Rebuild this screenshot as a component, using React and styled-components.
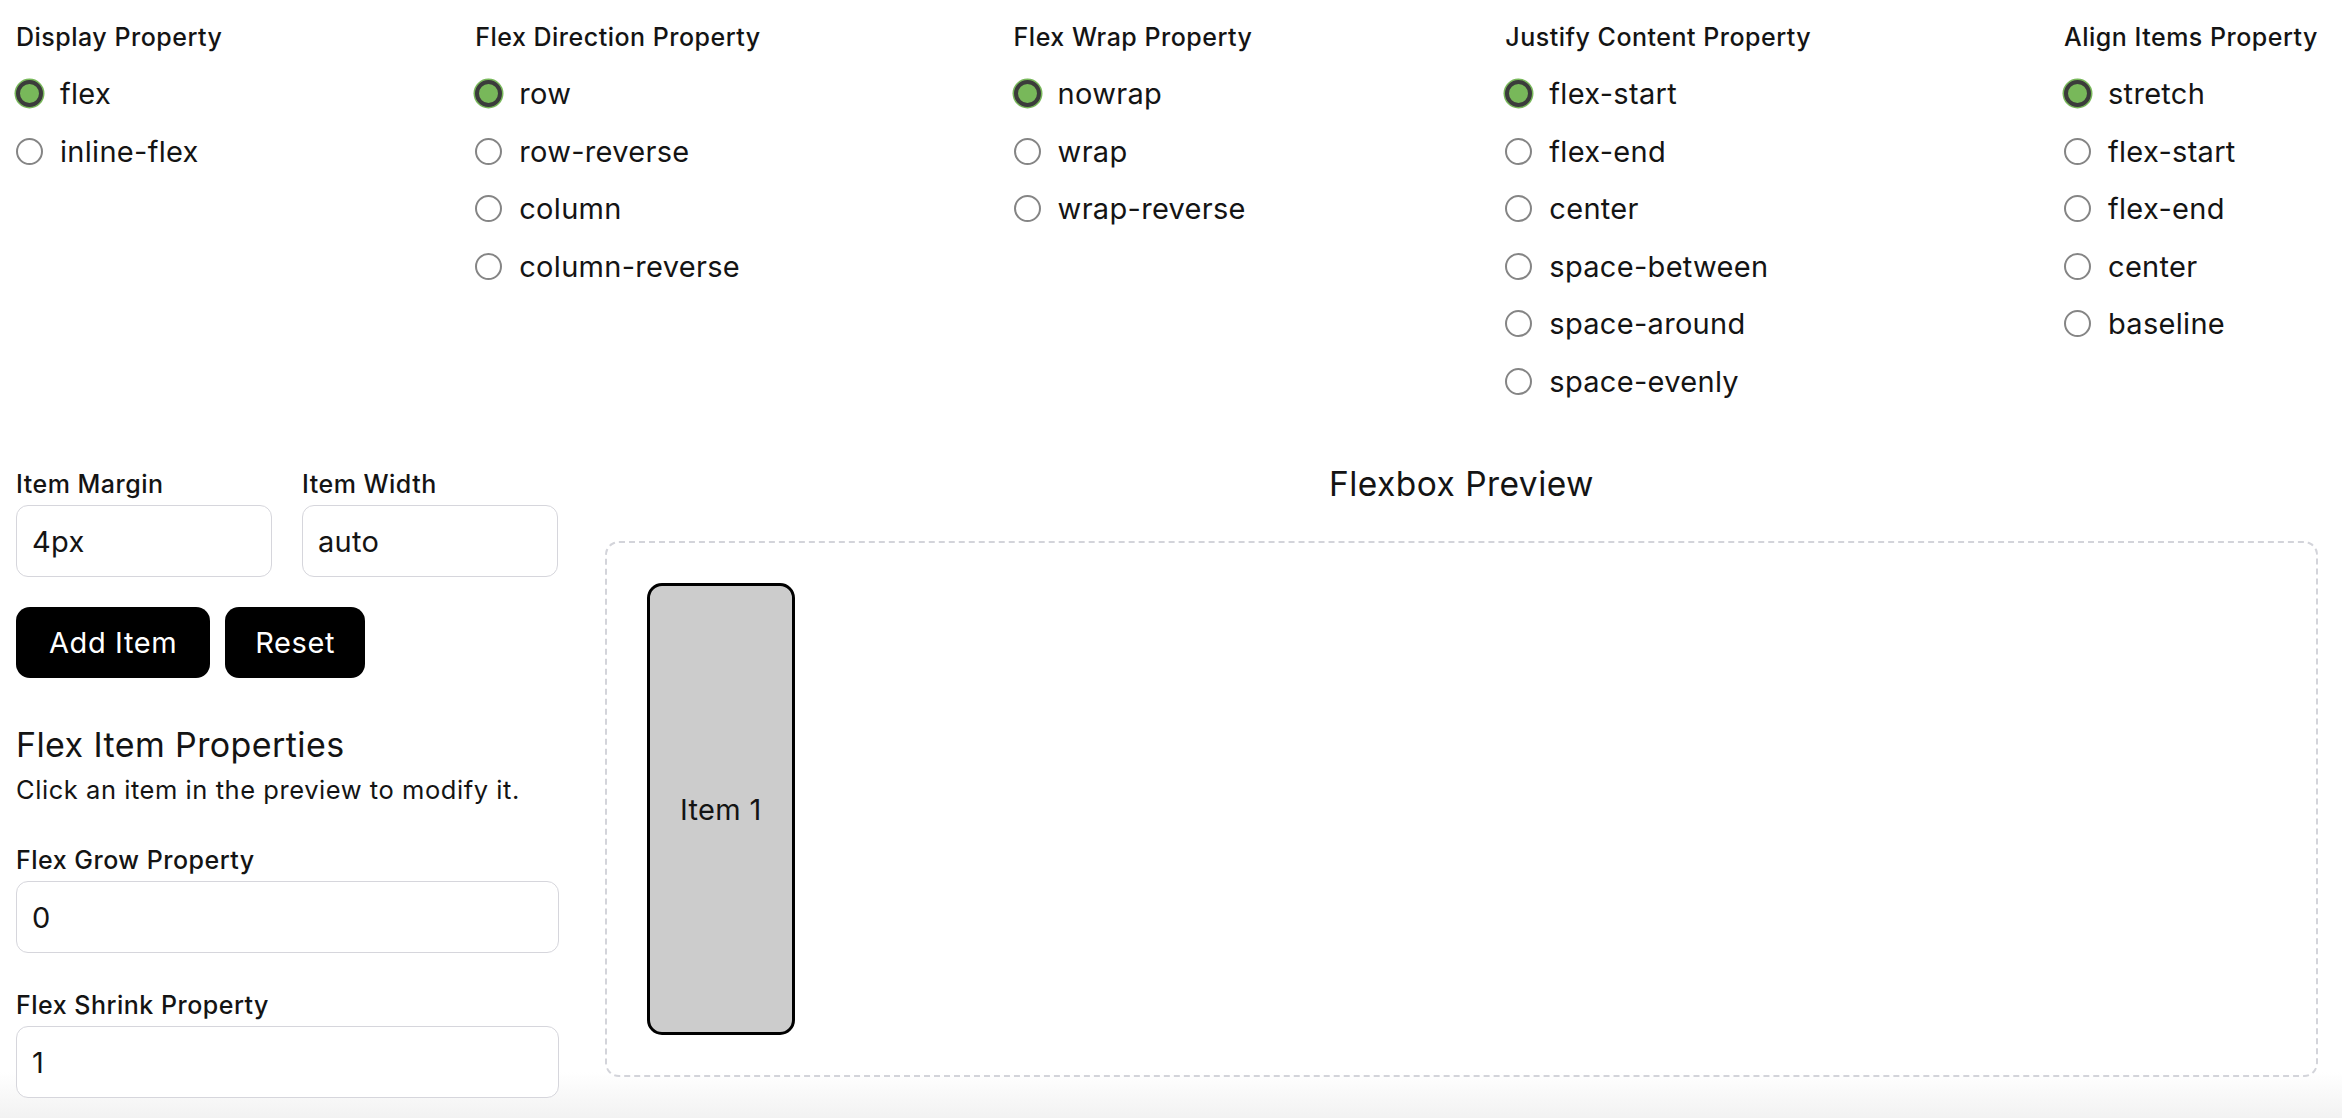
import React, { useState } from "react";
import styled, { createGlobalStyle } from "styled-components";

const GlobalStyle = createGlobalStyle`
  * {
    box-sizing: border-box;
  }
  body {
    margin: 0;
    font-family: "Inter", "Noto Sans", sans-serif;
    color: #141414;
    background: #fff;
  }
`;

const Page = styled.div`
  min-height: 100vh;
  padding: 22px 24px 0 16px;
  background: linear-gradient(to bottom, #fff calc(100% - 46px), #f2f2f2 100%);
`;

const Controls = styled.div`
  display: flex;
  justify-content: space-between;
  align-items: flex-start;
`;

const Group = styled.div`
  display: flex;
  flex-direction: column;
`;

const GroupTitle = styled.div`
  font-size: 25px;
  font-weight: 500;
  letter-spacing: 0.5px;
  line-height: 30px;
  margin-bottom: 13px;
`;

const Option = styled.label`
  display: flex;
  align-items: center;
  gap: 17px;
  height: 57.5px;
  font-size: 29px;
  letter-spacing: 0.3px;
  cursor: pointer;
`;

const Radio = styled.input`
  appearance: none;
  margin: 0;
  width: 27px;
  height: 27px;
  border-radius: 50%;
  border: 2px solid #858585;
  background: #fff;
  cursor: pointer;

  &:checked {
    border: 4px solid #3b3b3b;
    background: #78b85a;
    box-shadow: 0 0 0 1.5px #78b85a;
  }
`;

const Workspace = styled.div`
  display: grid;
  grid-template-columns: 543px 1fr;
  gap: 46px;
  margin-top: 59px;
  align-items: start;
`;

const Sidebar = styled.div`
  display: flex;
  flex-direction: column;
`;

const FieldRow = styled.div`
  display: grid;
  grid-template-columns: 256px 256px;
  gap: 30px;
`;

const Field = styled.label`
  display: flex;
  flex-direction: column;
  gap: 6px;
  margin-top: ${(p) => p.offset || 0}px;
`;

const FieldLabel = styled.span`
  font-size: 25px;
  font-weight: 500;
  letter-spacing: 0.5px;
  line-height: 30px;
`;

const TextInput = styled.input`
  width: 100%;
  height: 72px;
  padding: 0 15px;
  border: 1.5px solid #d6d6dc;
  border-radius: 12px;
  background: #fff;
  font-family: inherit;
  font-size: 29px;
  letter-spacing: 0.3px;
  color: #141414;
  outline: none;
`;

const Buttons = styled.div`
  display: flex;
  gap: 15px;
  margin-top: 30px;
`;

const Button = styled.button`
  height: 71px;
  padding: 0 ${(p) => p.pad}px;
  border: none;
  border-radius: 14px;
  background: #000;
  color: #fff;
  font-family: inherit;
  font-size: 29px;
  letter-spacing: 0.6px;
  cursor: pointer;
`;

const SectionTitle = styled.h2`
  margin: 47px 0 0;
  font-size: 34px;
  font-weight: 400;
  letter-spacing: 0.4px;
  line-height: 40px;
`;

const Hint = styled.p`
  margin: 10px 0 0;
  font-size: 25.5px;
  letter-spacing: 0.55px;
  line-height: 30px;
`;

const Preview = styled.div`
  display: flex;
  flex-direction: column;
`;

const PreviewTitle = styled.h2`
  margin: 0 0 42px;
  text-align: center;
  font-size: 33.5px;
  font-weight: 400;
  letter-spacing: 0.45px;
  line-height: 30px;
`;

const Board = styled.div`
  display: ${(p) => p.display};
  flex-direction: ${(p) => p.direction};
  flex-wrap: ${(p) => p.wrap};
  justify-content: ${(p) => p.justify};
  align-items: ${(p) => p.align};
  height: 536px;
  padding: 36px;
  border: 2px dashed #d3d4da;
  border-radius: 14px;
`;

const Item = styled.div`
  display: flex;
  align-items: center;
  justify-content: center;
  padding: 0 30px;
  border: 3px solid ${(p) => (p.active ? "#2f6fd6" : "#000")};
  border-radius: 15px;
  background: #cccccc;
  font-size: 29px;
  letter-spacing: 0.3px;
  cursor: pointer;
`;

const groups = [
  { key: "display", title: "Display Property", options: ["flex", "inline-flex"] },
  {
    key: "direction",
    title: "Flex Direction Property",
    options: ["row", "row-reverse", "column", "column-reverse"],
  },
  { key: "wrap", title: "Flex Wrap Property", options: ["nowrap", "wrap", "wrap-reverse"] },
  {
    key: "justify",
    title: "Justify Content Property",
    options: ["flex-start", "flex-end", "center", "space-between", "space-around", "space-evenly"],
  },
  {
    key: "align",
    title: "Align Items Property",
    options: ["stretch", "flex-start", "flex-end", "center", "baseline"],
  },
];

const defaults = {
  display: "flex",
  direction: "row",
  wrap: "nowrap",
  justify: "flex-start",
  align: "stretch",
};

const newItem = (n) => ({ id: n, grow: "0", shrink: "1" });

export default function App() {
  const [settings, setSettings] = useState(defaults);
  const [margin, setMargin] = useState("4px");
  const [width, setWidth] = useState("auto");
  const [items, setItems] = useState([newItem(1)]);
  const [selected, setSelected] = useState(null);

  const current = items.find((i) => i.id === selected) || items[0];

  const updateItem = (field, value) => {
    setItems(items.map((i) => (i.id === current.id ? { ...i, [field]: value } : i)));
  };

  const reset = () => {
    setSettings(defaults);
    setMargin("4px");
    setWidth("auto");
    setItems([newItem(1)]);
    setSelected(null);
  };

  return (
    <Page>
      <GlobalStyle />
      <Controls>
        {groups.map((g) => (
          <Group key={g.key}>
            <GroupTitle>{g.title}</GroupTitle>
            {g.options.map((o) => (
              <Option key={o}>
                <Radio
                  type="radio"
                  name={g.key}
                  checked={settings[g.key] === o}
                  onChange={() => setSettings({ ...settings, [g.key]: o })}
                />
                {o}
              </Option>
            ))}
          </Group>
        ))}
      </Controls>

      <Workspace>
        <Sidebar>
          <FieldRow>
            <Field>
              <FieldLabel>Item Margin</FieldLabel>
              <TextInput value={margin} onChange={(e) => setMargin(e.target.value)} />
            </Field>
            <Field>
              <FieldLabel>Item Width</FieldLabel>
              <TextInput value={width} onChange={(e) => setWidth(e.target.value)} />
            </Field>
          </FieldRow>
          <Buttons>
            <Button pad={33} onClick={() => setItems([...items, newItem(items.length + 1)])}>
              Add Item
            </Button>
            <Button pad={30} onClick={reset}>
              Reset
            </Button>
          </Buttons>

          <SectionTitle>Flex Item Properties</SectionTitle>
          <Hint>Click an item in the preview to modify it.</Hint>
          <Field offset={40}>
            <FieldLabel>Flex Grow Property</FieldLabel>
            <TextInput value={current.grow} onChange={(e) => updateItem("grow", e.target.value)} />
          </Field>
          <Field offset={37}>
            <FieldLabel>Flex Shrink Property</FieldLabel>
            <TextInput
              value={current.shrink}
              onChange={(e) => updateItem("shrink", e.target.value)}
            />
          </Field>
        </Sidebar>

        <Preview>
          <PreviewTitle>Flexbox Preview</PreviewTitle>
          <Board {...settings}>
            {items.map((i) => (
              <Item
                key={i.id}
                active={selected === i.id}
                onClick={() => setSelected(i.id)}
                style={{ margin, width, flexGrow: i.grow, flexShrink: i.shrink }}
              >
                Item {i.id}
              </Item>
            ))}
          </Board>
        </Preview>
      </Workspace>
    </Page>
  );
}
